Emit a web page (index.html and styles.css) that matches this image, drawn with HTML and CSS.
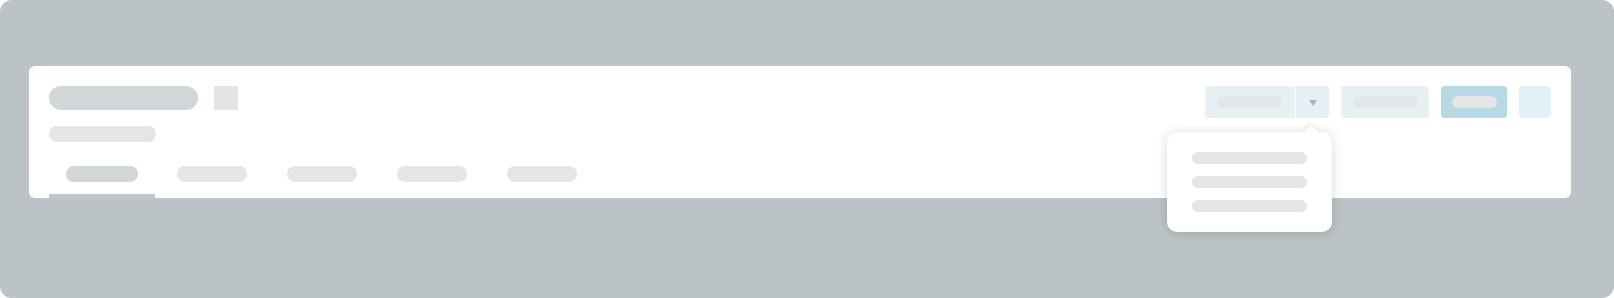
FILE: index.html
```html
<!DOCTYPE html>
<html lang="en">
<head>
    <meta charset="UTF-8">
    <meta name="viewport" content="width=device-width, initial-scale=1.0">
    <title>Page Header</title>
    <link rel="stylesheet" href="styles.css">
</head>
<body>
    <div class="frame">
        <div class="card">
            <div class="header">
                <div class="heading">
                    <div class="title-row">
                        <span class="bone title"></span>
                        <span class="badge"></span>
                    </div>
                    <span class="bone subtitle"></span>
                </div>
                <div class="actions">
                    <div class="split-wrap">
                        <div class="split">
                            <div class="split-main"><span class="bone btn-label"></span></div>
                            <div class="split-toggle"><span class="arrow"></span></div>
                        </div>
                        <div class="menu">
                            <span class="caret"></span>
                            <span class="bone menu-item"></span>
                            <span class="bone menu-item"></span>
                            <span class="bone menu-item"></span>
                        </div>
                    </div>
                    <div class="btn"><span class="bone btn-label"></span></div>
                    <div class="btn primary"><span class="bone btn-label short"></span></div>
                    <div class="btn icon"></div>
                </div>
            </div>
            <div class="tabs">
                <div class="tab active"><span class="bone tab-label wide"></span></div>
                <div class="tab"><span class="bone tab-label"></span></div>
                <div class="tab"><span class="bone tab-label"></span></div>
                <div class="tab"><span class="bone tab-label"></span></div>
                <div class="tab"><span class="bone tab-label"></span></div>
            </div>
        </div>
    </div>
</body>
</html>
```

FILE: styles.css
```css
body {
    margin: 0;
    background-color: #fff;
    font-family: "Liberation Sans", Arial, sans-serif;
}
.frame {
    width: 1614px;
    height: 298px;
    box-sizing: border-box;
    padding: 66px 43px 0 29px;
    background-color: #bcc3c6;
    border-radius: 12px;
}
.card {
    height: 132px;
    box-sizing: border-box;
    padding: 20px 20px 0;
    background-color: #fff;
    border-radius: 6px;
}
.header {
    display: flex;
    justify-content: space-between;
    align-items: flex-start;
}
.heading {
    display: flex;
    flex-direction: column;
    gap: 16px;
}
.title-row {
    display: flex;
    gap: 16px;
}
.bone {
    display: block;
    background-color: #e3e5e6;
}
.title {
    width: 149px;
    height: 24px;
    border-radius: 12px;
    background-color: #d1d6d8;
}
.badge {
    width: 24px;
    height: 24px;
    border-radius: 1px;
    background-color: #e2e3e4;
}
.subtitle {
    width: 107px;
    height: 16px;
    border-radius: 8px;
}
.actions {
    display: flex;
    gap: 12px;
}
.split-wrap {
    position: relative;
}
.split {
    display: flex;
    height: 32px;
    width: 124px;
    border-radius: 4px;
    overflow: hidden;
    background-color: #e6f1f6;
}
.split-main {
    width: 91px;
    display: flex;
    align-items: center;
    padding-left: 12px;
    box-sizing: border-box;
    border-right: 1px solid #fff;
}
.split-toggle {
    flex: 1;
    display: flex;
    align-items: center;
    justify-content: center;
}
.arrow {
    width: 0;
    height: 0;
    border-left: 4px solid transparent;
    border-right: 4px solid transparent;
    border-top: 6px solid #a9b2b7;
    margin-top: 1px;
}
.btn-label {
    width: 65px;
    height: 12px;
    border-radius: 6px;
}
.btn-label.short {
    width: 45px;
}
.btn {
    height: 32px;
    width: 88px;
    border-radius: 4px;
    display: flex;
    align-items: center;
    justify-content: center;
    background-color: #e6f1f6;
}
.btn.primary {
    width: 66px;
    background-color: #b7d9e4;
}
.btn.icon {
    width: 32px;
    background-color: #e3f0f6;
}
.menu {
    position: absolute;
    left: -38px;
    top: 46px;
    width: 165px;
    box-sizing: border-box;
    padding: 20px 25px;
    display: flex;
    flex-direction: column;
    gap: 12px;
    background-color: #fff;
    border-radius: 10px;
    box-shadow: 0 1px 12px rgba(0, 0, 0, 0.16);
    z-index: 2;
}
.caret {
    position: absolute;
    top: -5px;
    left: 139px;
    width: 10px;
    height: 10px;
    background-color: #fff;
    transform: rotate(45deg);
    box-shadow: -2px -2px 4px rgba(0, 0, 0, 0.06);
}
.menu-item {
    width: 115px;
    height: 12px;
    border-radius: 6px;
}
.tabs {
    display: flex;
    gap: 4px;
    margin-top: 12px;
}
.tab {
    width: 106px;
    box-sizing: border-box;
    padding: 12px 0;
    display: flex;
    justify-content: center;
    border-bottom: 4px solid transparent;
}
.tab.active {
    border-bottom-color: #c2c8cb;
}
.tab-label {
    width: 70px;
    height: 16px;
    border-radius: 8px;
}
.tab-label.wide {
    width: 72px;
    background-color: #d1d6d8;
}
```
